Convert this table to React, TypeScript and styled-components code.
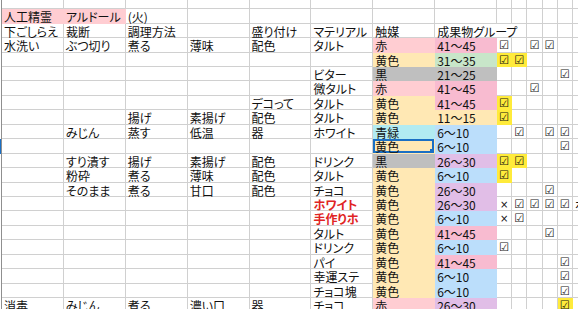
import React from 'react';
import styled, { createGlobalStyle, css } from 'styled-components';

const FILL = {
  red: '#ffcdd2',
  pink: '#f8bbd0',
  green: '#c8e6c9',
  gray: '#bfbfbf',
  cream: '#ffe8b4',
  cyan: '#b2ebf2',
  blue: '#bbdefb',
  lav: '#e1bee7',
  hi: '#ffeb3b',
};

const COLS = ['a', 'b', 'c', 'd', 'e', 'f', 'g', 'h', 'i', 'j', 'k', 'l', 'm', 'n'] as const;
type Col = (typeof COLS)[number];

type CellSpec = {
  t?: string;
  bg?: string;
  red?: boolean;
  span?: number;
  sel?: boolean;
  mark?: 'check' | 'cross';
};
type RowSpec = Partial<Record<Col, CellSpec | string>>;

const ck = (hi?: boolean): CellSpec => ({ t: '☑', mark: 'check', bg: hi ? FILL.hi : undefined });
const ex: CellSpec = { t: '×', mark: 'cross' };
const fill = (t: string, bg: string): CellSpec => ({ t, bg });

const ROWS: RowSpec[] = [
  {},
  { a: fill('人工精霊', FILL.red), b: fill('アルドール', FILL.red), c: '(火)' },
  { a: '下ごしらえ', b: '裁断', c: '調理方法', e: '盛り付け', f: 'マテリアル', g: '触媒', h: { t: '成果物グループ', span: 3 } },
  { a: '水洗い', b: 'ぶつ切り', c: '煮る', d: '薄味', e: '配色', f: 'タルト', g: fill('赤', FILL.red), h: fill('41～45', FILL.pink), i: ck(), k: ck(), l: ck() },
  { g: fill('黄色', FILL.cream), h: fill('31～35', FILL.green), i: ck(true), j: ck(true) },
  { f: 'ビター', g: fill('黒', FILL.gray), h: fill('21～25', FILL.gray), m: ck() },
  { f: '微タルト', g: fill('赤', FILL.red), h: fill('41～45', FILL.pink), k: ck() },
  { e: 'デコって', f: 'タルト', g: fill('黄色', FILL.cream), h: fill('41～45', FILL.pink), i: ck(true) },
  { c: '揚げ', d: '素揚げ', e: '配色', f: 'タルト', g: fill('黄色', FILL.cream), h: fill('11～15', FILL.cream), i: ck(true) },
  { b: 'みじん', c: '蒸す', d: '低温', e: '器', f: 'ホワイト', g: fill('青緑', FILL.cyan), h: fill('6～10', FILL.blue), j: ck(), l: ck(), m: ck() },
  { g: { t: '黄色', bg: FILL.cream, sel: true }, h: fill('6～10', FILL.blue), m: ck() },
  { b: 'すり潰す', c: '揚げ', d: '素揚げ', e: '配色', f: 'ドリンク', g: fill('黒', FILL.gray), h: fill('26～30', FILL.lav), i: ck(true), j: ck(true) },
  { b: '粉砕', c: '煮る', d: '薄味', e: '配色', f: 'タルト', g: fill('黄色', FILL.cream), h: fill('6～10', FILL.blue), i: ck(true) },
  { b: 'そのまま', c: '煮る', d: '甘口', e: '配色', f: 'チョコ', g: fill('黄色', FILL.cream), h: fill('26～30', FILL.lav), l: ck() },
  { f: { t: 'ホワイト', red: true }, g: fill('黄色', FILL.cream), h: fill('26～30', FILL.lav), i: ex, j: ck(), k: ck(), l: ck(), m: ck(), n: 'ホ' },
  { f: { t: '手作りホ', red: true }, g: fill('黄色', FILL.cream), h: fill('6～10', FILL.blue), i: ex, j: ck() },
  { f: 'タルト', g: fill('黄色', FILL.cream), h: fill('41～45', FILL.pink), l: ck() },
  { f: 'ドリンク', g: fill('黄色', FILL.cream), h: fill('6～10', FILL.blue), i: ck() },
  { f: 'パイ', g: fill('黄色', FILL.cream), h: fill('41～45', FILL.pink), m: ck() },
  { f: '幸運ステ', g: fill('黄色', FILL.cream), h: fill('6～10', FILL.blue), m: ck() },
  { f: 'チョコ塊', g: fill('黄色', FILL.cream), h: fill('6～10', FILL.blue), m: ck() },
  { a: '消毒', b: 'みじん', c: '煮る', d: '濃い口', e: '器', f: 'チョコ', g: fill('赤', FILL.red), h: fill('26～30', FILL.lav), m: ck(true) },
];

const GlobalStyle = createGlobalStyle`
  html, body {
    margin: 0;
    padding: 0;
    background: #fff;
  }
  body {
    font-family: "Noto Sans CJK JP", "Noto Sans", sans-serif;
  }
`;

const Sheet = styled.div`
  display: grid;
  grid-template-columns: 2px repeat(8, 61.875px) repeat(6, 15.2px);
  grid-template-rows: 9.3px repeat(21, 14.45px);
  width: 578px;
  height: 309px;
  overflow: hidden;
`;

const Edge = styled.div<{ $sel?: boolean }>`
  box-sizing: border-box;
  border-left: 1px solid ${(p) => (p.$sel ? '#1a6fc4' : '#fff')};
  border-right: 1px solid #8f8f8f;
`;

const Cell = styled.div<{
  $bg?: string;
  $span?: number;
  $red?: boolean;
  $mark?: 'check' | 'cross';
  $sel?: boolean;
}>`
  box-sizing: border-box;
  grid-column: span ${(p) => p.$span ?? 1};
  min-width: 0;
  background: ${(p) => p.$bg ?? '#fff'};
  border-right: 1px solid ${(p) => (p.$bg ? 'transparent' : '#d0d0d0')};
  border-bottom: 1px solid ${(p) => (p.$bg ? 'transparent' : '#d0d0d0')};
  padding-left: 2px;
  color: ${(p) => (p.$red ? '#e02424' : '#111')};
  font-weight: ${(p) => (p.$red ? 700 : 400)};
  font-size: 12px;
  line-height: 15px;
  font-feature-settings: 'palt';
  white-space: nowrap;

  ${(p) =>
    p.$mark === 'check' &&
    css`
      font-family: 'DejaVu Sans', sans-serif;
      font-size: 11.5px;
      font-weight: 700;
    `}

  ${(p) =>
    p.$mark === 'cross' &&
    css`
      padding-left: 3px;
      font-family: 'DejaVu Sans', sans-serif;
      font-size: 10px;
      line-height: 16px;
    `}

  ${(p) =>
    p.$sel &&
    css`
      position: relative;
      box-shadow: inset 0 0 0 2px #1a6fc4;
      &::after {
        content: '';
        position: absolute;
        right: 0;
        bottom: 0;
        width: 4px;
        height: 4px;
        background: #1a6fc4;
      }
    `}
`;

const SheetRow = ({ row }: { row: RowSpec }) => {
  const sel = Object.values(row).some((c) => typeof c === 'object' && c.sel);
  const cells: React.ReactNode[] = [];
  let skip = 0;
  COLS.forEach((col) => {
    if (skip > 0) {
      skip--;
      return;
    }
    const raw = row[col];
    const spec: CellSpec = typeof raw === 'string' ? { t: raw } : raw ?? {};
    if (spec.span) skip = spec.span - 1;
    cells.push(
      <Cell key={col} $bg={spec.bg} $span={spec.span} $red={spec.red} $mark={spec.mark} $sel={spec.sel}>
        {spec.t}
      </Cell>,
    );
  });
  return (
    <>
      <Edge $sel={sel} />
      {cells}
    </>
  );
};

export default function App() {
  return (
    <>
      <GlobalStyle />
      <Sheet>
        {ROWS.map((row, i) => (
          <SheetRow key={i} row={row} />
        ))}
      </Sheet>
    </>
  );
}
